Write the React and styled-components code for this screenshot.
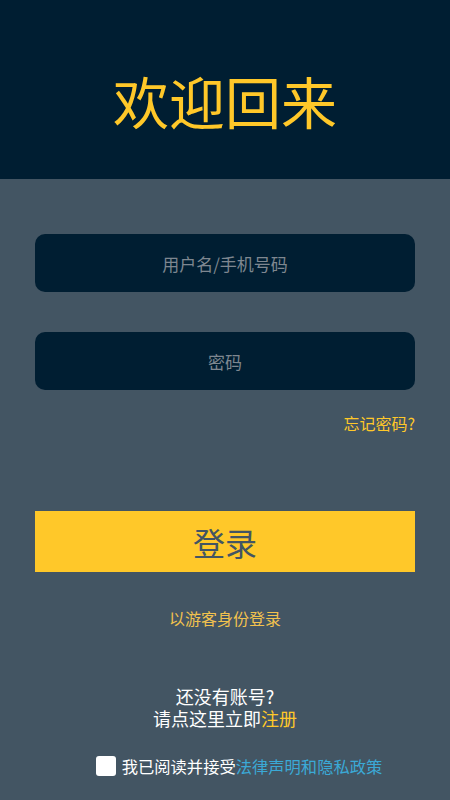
import React, { useState } from "react";
import styled, { createGlobalStyle } from "styled-components";

const Global = createGlobalStyle`
  html, body { margin: 0; padding: 0; background: #435563; }
  body { font-family: "Noto Sans CJK SC", "Noto Sans", sans-serif; }
  * { box-sizing: border-box; }
`;

const Page = styled.div`
  width: 450px;
  min-height: 800px;
  background: #435563;
  display: flex;
  flex-direction: column;
`;

const Header = styled.header`
  height: 179px;
  padding-top: 20px;
  background: #001e32;
  display: flex;
  align-items: center;
  justify-content: center;
`;

const Title = styled.h1`
  margin: 0;
  font-size: 56px;
  font-weight: 400;
  color: #ffc829;
  line-height: 1;
`;

const Body = styled.main`
  padding: 55px 35px 0;
  display: flex;
  flex-direction: column;
`;

const Input = styled.input`
  flex: none;
  height: 58px;
  width: 100%;
  border: none;
  outline: none;
  border-radius: 10px;
  background: #001e32;
  color: #ffffff;
  font-family: inherit;
  font-size: 17px;
  text-align: center;
  margin-top: ${(p) => p.$gap || 0}px;
  &::placeholder { color: #7e8790; }
`;

const ForgotRow = styled.div`
  margin-top: 22px;
  display: flex;
  justify-content: flex-end;
  line-height: 22px;
`;

const YellowLink = styled.a`
  color: ${(p) => p.$color || "#ffc829"};
  font-size: ${(p) => p.$size || 16}px;
  text-decoration: none;
  cursor: pointer;
`;

const LoginButton = styled.button`
  flex: none;
  margin-top: 77px;
  height: 61px;
  width: 100%;
  border: none;
  background: #ffc829;
  color: #435563;
  font-family: inherit;
  font-size: 32px;
  cursor: pointer;
`;

const Center = styled.div`
  text-align: center;
  line-height: 22px;
  margin-top: ${(p) => p.$gap}px;
`;

const Note = styled.div`
  margin-top: 56px;
  display: flex;
  flex-direction: column;
  align-items: center;
  font-size: 18px;
  color: #ffffff;
`;

const NoteLine = styled.div`
  line-height: 22px;
  height: 22px;
`;

const AgreeRow = styled.label`
  margin-top: 26px;
  padding-left: 28px;
  display: flex;
  align-items: center;
  justify-content: center;
  gap: 6px;
  font-size: 16.3px;
  line-height: 22px;
  color: #ffffff;
  cursor: pointer;
`;

const Box = styled.span`
  width: 20px;
  height: 20px;
  border-radius: 3px;
  background: #ffffff;
  display: inline-flex;
  align-items: center;
  justify-content: center;
  color: #435563;
  font-size: 14px;
`;

const Blue = styled.span`
  color: #3ba9d6;
`;

export default function App() {
  const [agree, setAgree] = useState(false);
  return (
    <Page>
      <Global />
      <Header>
        <Title>欢迎回来</Title>
      </Header>
      <Body>
        <Input placeholder="用户名/手机号码" />
        <Input $gap={40} type="password" placeholder="密码" />
        <ForgotRow>
          <YellowLink>忘记密码?</YellowLink>
        </ForgotRow>
        <LoginButton>登录</LoginButton>
        <Center $gap={35}>
          <YellowLink $color="#f2c24e">以游客身份登录</YellowLink>
        </Center>
        <Note>
          <NoteLine>还没有账号?</NoteLine>
          <NoteLine>
            请点这里立即<YellowLink $size={18}>注册</YellowLink>
          </NoteLine>
        </Note>
        <AgreeRow onClick={() => setAgree(!agree)}>
          <Box>{agree ? "✓" : ""}</Box>
          <span>
            我已阅读并接受<Blue>法律声明和隐私政策</Blue>
          </span>
        </AgreeRow>
      </Body>
    </Page>
  );
}
